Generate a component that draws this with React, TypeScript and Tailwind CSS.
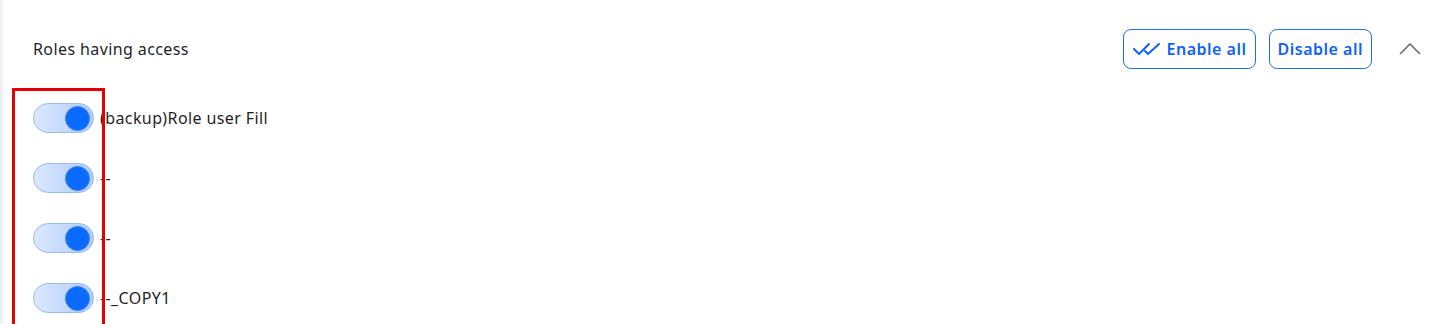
const ROLES = ["(backup)Role user Fill", "--", "--", "--_COPY1"];

function Toggle() {
  return (
    <div className="relative flex h-[30px] w-[61px] shrink-0 items-center rounded-full border border-[#94bbfa] bg-gradient-to-r from-[#dce8fe] to-[#b0cdfb]">
      <div className="absolute right-[3px] h-[25px] w-[25px] rounded-full border-[1.5px] border-[#3a7ef2] bg-[#0b6bff]" />
    </div>
  );
}

export default function App() {
  return (
    <div className="relative flex h-[324px] w-full overflow-hidden bg-white font-['Noto_Sans','Liberation_Sans',sans-serif] text-[#1f1f1f]">
      <div className="w-[3px] shrink-0 bg-[#eef1f5]" />
      <div className="flex flex-1 flex-col pl-[30px] pr-[32px]">
        <div className="flex items-center justify-between pt-[29px]">
          <span className="text-[16px] tracking-[0.4px]">Roles having access</span>
          <div className="flex items-center">
            <button className="flex h-[40px] items-center gap-[6px] rounded-[8px] border border-[#1f6ff5] pl-[9px] pr-[8px] text-[16px] font-semibold tracking-[0.5px] text-[#0f62fe]">
              <svg width="28" height="14" viewBox="0 0 28 14" fill="none" stroke="#0f62fe" strokeWidth="2" strokeLinecap="round" strokeLinejoin="round">
                <path d="M1 7 L6 12 L16 2" />
                <path d="M12 9 L15 12 L26 2" />
              </svg>
              Enable all
            </button>
            <button className="ml-[13px] flex h-[40px] items-center rounded-[8px] border border-[#1f6ff5] px-[8px] text-[16px] font-semibold tracking-[0.5px] text-[#0f62fe]">
              Disable all
            </button>
            <svg className="ml-[27px]" width="22" height="12" viewBox="0 0 22 12" fill="none" stroke="#6b6b6b" strokeWidth="1.6">
              <path d="M1 11 L11 1 L21 11" />
            </svg>
          </div>
        </div>
        <div className="mt-[34px] flex flex-col gap-[30px]">
          {ROLES.map((r, i) => (
            <div key={i} className="flex h-[30px] items-center gap-[6px]">
              <Toggle />
              <span className="text-[16px] tracking-[0.4px]">{r}</span>
            </div>
          ))}
        </div>
      </div>
      <div className="pointer-events-none absolute left-[12px] top-[88px] h-[236px] w-[93px] border-[3px] border-b-0 border-[#e60000]" />
    </div>
  );
}
